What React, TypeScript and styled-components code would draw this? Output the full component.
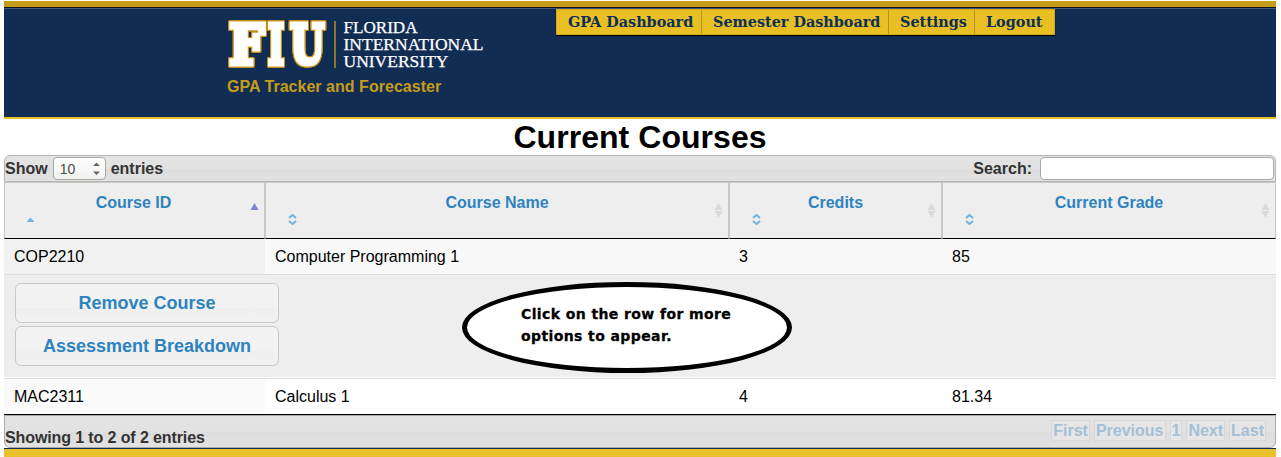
import React from "react";
import styled, { createGlobalStyle } from "styled-components";

const Global = createGlobalStyle`
  * { box-sizing: border-box; }
  body {
    margin: 0;
    background: #fff;
    color: #000;
    font: 16px/18px "Liberation Sans", Arial, sans-serif;
    overflow: hidden;
  }
`;

const Page = styled.div`
  width: 1272px;
  margin: 1px 0 0 4px;
  height: 456px;
  display: flex;
  flex-direction: column;
`;

const Banner = styled.header`
  height: 118px;
  flex: none;
  display: flex;
  align-items: flex-start;
  background: #122d53;
  border-top: 6px solid #c69c1b;
  border-bottom: 2px solid #e8c02a;
  box-shadow: inset 0 1px #0d1420, inset 0 2px #3c587c;
`;

const Brand = styled.div`
  width: 329px;
  padding: 12px 0 0 223px;
  flex: none;
`;

const Logo = styled.svg`
  display: block;
  width: 262px;
  height: 52px;
  overflow: visible;
`;

const Monogram = styled.g`
  fill: #fff;
  stroke: #fff;
  stroke-width: 5px;
  stroke-linejoin: miter;
  font: bold 54px "DejaVu Serif", serif;
  filter: drop-shadow(1px 0 0 #c69214) drop-shadow(-1px 0 0 #c69214)
    drop-shadow(0 1px 0 #c69214) drop-shadow(0 -1px 0 #c69214);
`;

const Tagline = styled.div`
  margin-top: 7px;
  white-space: nowrap;
  font-weight: bold;
  letter-spacing: 0.03px;
  color: #c69c1b;
`;

const Nav = styled.nav`
  display: flex;
  margin: 2px 0 0 223px;
  height: 26px;
  background: #e8c023;
  border: 1px solid #d3a61e;
  box-shadow: 0 1px 1px #000;
`;

const NavLink = styled.a<{ $width: number }>`
  width: ${(p) => p.$width}px;
  padding-left: 11px;
  font: bold 14.4px/24px "DejaVu Serif", serif;
  color: #0c2f57;
  white-space: nowrap;
  & + & {
    border-left: 1px solid #b8941a;
  }
`;

const Title = styled.h1`
  margin: 0;
  height: 36px;
  flex: none;
  font-size: 32px;
  line-height: 36px;
  text-align: center;
  letter-spacing: 0.05px;
`;

const Bar = styled.div<{ $end?: boolean }>`
  display: flex;
  flex: none;
  justify-content: space-between;
  align-items: ${(p) => (p.$end ? "flex-start" : "center")};
  height: ${(p) => (p.$end ? 33 : 27)}px;
  border: 1px solid ${(p) => (p.$end ? "#aaa" : "#b4b4b4")};
  border-radius: ${(p) => (p.$end ? "0 0 6px 6px" : "6px 6px 0 0")};
  background: linear-gradient(#e3e3e3 0, #e2e2e2 50%, #dddddd 52%, #e2e2e2 100%);
  color: #333;
  font-weight: bold;
`;

const Field = styled.label`
  display: flex;
  align-items: center;
`;

const LengthSelect = styled.span`
  display: flex;
  align-items: center;
  justify-content: space-between;
  width: 53px;
  height: 23px;
  margin: 0 5px;
  padding: 0 5px 0 6px;
  border: 1px solid #aaa7a2;
  border-radius: 4px;
  background: linear-gradient(#fff, #f1f1f0);
  font: 14px/20px "Liberation Sans", sans-serif;
  color: #4c4c4c;
`;

const SearchInput = styled.input`
  width: 234px;
  height: 23px;
  margin: 0 1px 0 8px;
  border: 1px solid #aaa7a2;
  border-radius: 4px;
  background: #fff;
`;

const columns = "261px 464px 213px 334px";

const HeadRow = styled.div`
  display: grid;
  grid-template-columns: ${columns};
  height: 57px;
  flex: none;
`;

const HeadCell = styled.div`
  display: grid;
  grid-template-columns: 32px 1fr 32px;
  border: 1px solid #c9c9c9;
  border-bottom-color: #000;
  background: #eee;
  color: #2e83bf;
  font-weight: bold;
  text-align: center;
  white-space: nowrap;
  span { padding-top: 11px; }
  &:first-child span { padding-right: 2px; }
`;

const JuiIcon = styled.svg`
  width: 9px;
  height: 11px;
  margin: 31px 0 0 22px;
  ${HeadCell}:first-child & { margin-left: 21px; }
`;

const SortIcon = styled.svg`
  width: 9px;
  height: 16px;
  margin: 20px 5px 0 auto;
`;

const Row = styled.div<{ $odd?: boolean }>`
  display: grid;
  grid-template-columns: ${columns};
  height: ${(p) => (p.$odd ? 35 : 36)}px;
  flex: none;
  line-height: 35px;
  background: ${(p) => (p.$odd ? "#f9f9f9" : "#fff")};
  border-bottom: ${(p) => (p.$odd ? "none" : "1px solid #000")};
`;

const Cell = styled.div<{ $shade?: string }>`
  padding-left: 10px;
  background: ${(p) => p.$shade ?? "transparent"};
`;

const Details = styled.div`
  position: relative;
  display: flex;
  flex: none;
  flex-direction: column;
  gap: 3px;
  height: 105px;
  padding: 8px 0 0 11px;
  border-top: 1px solid #dcdcdc;
  border-bottom: 1px solid #dcdcdc;
  background: linear-gradient(#eee 0 102px, #fff 102px);
`;

const ActionButton = styled.button`
  width: 264px;
  height: 40px;
  padding: 0;
  border: 1px solid #c8c8c8;
  border-radius: 6px;
  background: linear-gradient(#f3f3f3 0, #f2f2f2 62%, #efefef 64%, #f2f2f2 100%);
  color: #2e83bf;
  font: bold 18px/20px "Liberation Sans", Arial, sans-serif;
`;

const Callout = styled.div`
  position: absolute;
  left: 458px;
  top: 7px;
  width: 330px;
  height: 91px;
  padding: 16px 0 0 54px;
  border: 5px solid #000;
  border-radius: 50%;
  background: #fff;
  font: bold 14px/22px "DejaVu Sans", Verdana, sans-serif;
  letter-spacing: 0.4px;
  -webkit-text-stroke: 0.3px #000;
  white-space: nowrap;
`;

const Info = styled.div`
  padding-top: 13px;
  letter-spacing: -0.11px;
`;

const Pager = styled.div`
  display: flex;
  gap: 4px;
  margin: 4px 9px 0 0;
`;

const PageButton = styled.a`
  height: 21px;
  padding: 0 1px;
  border: 1px solid #d8d8d8;
  background: #e6e6e6;
  color: #a4c0d6;
  line-height: 19px;
`;

const Footer = styled.footer`
  height: 9px;
  flex: none;
  border-top: 1px solid #122d53;
  background: #e8c02a;
`;

const nav: [string, number][] = [
  ["GPA Dashboard", 144],
  ["Semester Dashboard", 187],
  ["Settings", 86],
  ["Logout", 80],
];

const headings = ["Course ID", "Course Name", "Credits", "Current Grade"];

const letters: [string, number, number][] = [
  ["F", 2.2, 35],
  ["I", 41, 16],
  ["U", 63.2, 34],
];

function FiuLogo() {
  return (
    <Logo viewBox="0 0 262 52">
      <Monogram>
        {letters.map(([c, x, w]) => (
          <text key={c} x={x} y="44.500" textLength={w} lengthAdjust="spacingAndGlyphs">
            {c}
          </text>
        ))}
      </Monogram>
      <path d="M108 2V49" stroke="#b98c1c" strokeWidth="1.5" />
      <g fill="#fff" stroke="#fff" strokeWidth="0.25" fontFamily="Liberation Serif" fontSize="17.5">
        <text x="116.500" y="14" textLength="74" lengthAdjust="spacingAndGlyphs">FLORIDA</text>
        <text x="116.500" y="31" textLength="140" lengthAdjust="spacingAndGlyphs">INTERNATIONAL</text>
        <text x="116.500" y="48" textLength="105" lengthAdjust="spacingAndGlyphs">UNIVERSITY</text>
      </g>
    </Logo>
  );
}

export default function App() {
  return (
    <>
      <Global />
      <Page>
        <Banner>
          <Brand>
            <FiuLogo />
            <Tagline>GPA Tracker and Forecaster</Tagline>
          </Brand>
          <Nav>
            {nav.map(([label, w]) => (
              <NavLink key={label} $width={w}>{label}</NavLink>
            ))}
          </Nav>
        </Banner>
        <Title>Current Courses</Title>
        <Bar>
          <Field>
            Show
            <LengthSelect>
              10
              <svg width="7" height="13" fill="#666">
                <path d="M0 4L3.500 0.500L7 4ZM0 9.500L3.500 13L7 9.500Z" />
              </svg>
            </LengthSelect>
            entries
          </Field>
          <Field>
            Search:
            <SearchInput />
          </Field>
        </Bar>
        <HeadRow>
          {headings.map((h, i) => (
            <HeadCell key={h}>
              <JuiIcon viewBox="0 0 9 11">
                {i === 0 ? (
                  <path d="M0.500 8L4.500 3.500L8.500 8Z" fill="#6fb3e3" />
                ) : (
                  <path d="M1 4L4.500 1L8 4M1 7L4.500 10L8 7" fill="none" stroke="#6fb3e3" strokeWidth="2" />
                )}
              </JuiIcon>
              <span>{h}</span>
              <SortIcon viewBox="0 0 9 16">
                <path d="M0.500 7L4.500 0L8.500 7Z" fill={i === 0 ? "#8080e0" : "#d9d9d9"} />
                {i > 0 && <path d="M0.500 8L4.500 15L8.500 8Z" fill="#d9d9d9" />}
              </SortIcon>
            </HeadCell>
          ))}
        </HeadRow>
        <Row $odd>
          <Cell $shade="#f1f1f1">COP2210</Cell>
          <Cell>Computer Programming 1</Cell>
          <Cell>3</Cell>
          <Cell>85</Cell>
        </Row>
        <Details>
          <ActionButton>Remove Course</ActionButton>
          <ActionButton>Assessment Breakdown</ActionButton>
          <Callout>
            Click on the row for more
            <br />
            options to appear.
          </Callout>
        </Details>
        <Row>
          <Cell $shade="#fafafa">MAC2311</Cell>
          <Cell>Calculus 1</Cell>
          <Cell>4</Cell>
          <Cell>81.34</Cell>
        </Row>
        <Bar $end>
          <Info>Showing 1 to 2 of 2 entries</Info>
          <Pager>
            {["First", "Previous", "1", "Next", "Last"].map((p) => (
              <PageButton key={p}>{p}</PageButton>
            ))}
          </Pager>
        </Bar>
        <Footer />
      </Page>
    </>
  );
}
